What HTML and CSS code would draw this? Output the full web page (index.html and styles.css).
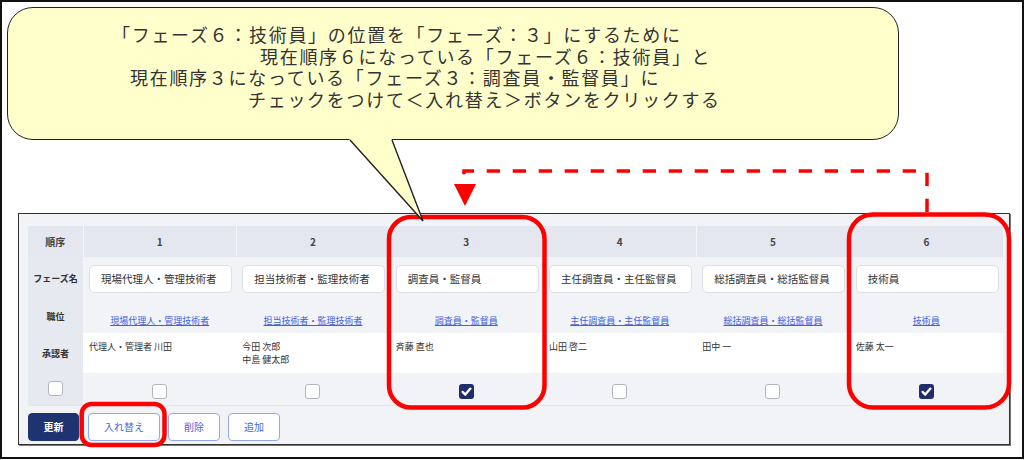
FILE: index.html
```html
<!DOCTYPE html>
<html lang="ja">
<head>
<meta charset="UTF-8">
<title>フェーズ設定</title>
<link rel="stylesheet" href="styles.css">
</head>
<body>
<div class="sheet">
  <!-- 吹き出しの説明 -->
  <div class="bubble">
    <p class="line l1">「フェーズ６：技術員」の位置を「フェーズ：３」にするために</p>
    <p class="line l2">現在順序６になっている「フェーズ６：技術員」と</p>
    <p class="line l3">現在順序３になっている「フェーズ３：調査員・監督員」に</p>
    <p class="line l4">チェックをつけて＜入れ替え＞ボタンをクリックする</p>
  </div>

  <!-- フェーズ一覧 -->
  <div class="panel">
    <table class="phase-table">
      <colgroup>
        <col class="col-label">
        <col><col><col><col><col><col>
      </colgroup>
      <tr class="row-head">
        <th>順序</th>
        <th>1</th><th>2</th><th>3</th><th>4</th><th>5</th><th>6</th>
      </tr>
      <tr class="row-name">
        <th>フェーズ名</th>
        <td><input class="name-input" type="text" value="現場代理人・管理技術者"></td>
        <td><input class="name-input" type="text" value="担当技術者・監理技術者"></td>
        <td><input class="name-input" type="text" value="調査員・監督員"></td>
        <td><input class="name-input" type="text" value="主任調査員・主任監督員"></td>
        <td><input class="name-input" type="text" value="総括調査員・総括監督員"></td>
        <td><input class="name-input" type="text" value="技術員"></td>
      </tr>
      <tr class="row-post">
        <th>職位</th>
        <td><a href="#">現場代理人・管理技術者</a></td>
        <td><a href="#">担当技術者・監理技術者</a></td>
        <td><a href="#">調査員・監督員</a></td>
        <td><a href="#">主任調査員・主任監督員</a></td>
        <td><a href="#">総括調査員・総括監督員</a></td>
        <td><a href="#">技術員</a></td>
      </tr>
      <tr class="row-approver">
        <th>承認者</th>
        <td>代理人・管理者 川田</td>
        <td>今田 次郎<br>中島 健太郎</td>
        <td>斉藤 直也</td>
        <td>山田 啓二</td>
        <td>田中 一</td>
        <td>佐藤 太一</td>
      </tr>
      <tr class="row-check">
        <th><span class="chk"></span></th>
        <td><span class="chk"></span></td>
        <td><span class="chk"></span></td>
        <td><span class="chk is-checked"><svg viewBox="0 0 15 15" width="15" height="15"><path d="M3.6 7.9 L6.3 10.6 L11.4 4.6" fill="none" stroke="#fff" stroke-width="2.3" stroke-linecap="round" stroke-linejoin="round"/></svg></span></td>
        <td><span class="chk"></span></td>
        <td><span class="chk"></span></td>
        <td><span class="chk is-checked"><svg viewBox="0 0 15 15" width="15" height="15"><path d="M3.6 7.9 L6.3 10.6 L11.4 4.6" fill="none" stroke="#fff" stroke-width="2.3" stroke-linecap="round" stroke-linejoin="round"/></svg></span></td>
      </tr>
    </table>
    <div class="actions">
      <button class="btn btn-primary" type="button">更新</button>
      <button class="btn" type="button">入れ替え</button>
      <button class="btn" type="button">削除</button>
      <button class="btn" type="button">追加</button>
    </div>
  </div>
</div>

<!-- 注釈（赤枠・点線矢印・吹き出しのしっぽ） -->
<svg class="marks" width="1024" height="460" viewBox="0 0 1024 460">
  <rect x="389" y="217" width="155.5" height="190.5" rx="22" fill="none" stroke="#ff0000" stroke-width="4.5"/>
  <rect x="849" y="214.5" width="160" height="193" rx="24" fill="none" stroke="#ff0000" stroke-width="4.5"/>
  <rect x="81.7" y="404" width="82.8" height="41" rx="10" fill="none" stroke="#ff0000" stroke-width="4.5"/>
  <path d="M927 212 V171 H464 V176" fill="none" stroke="#ff0000" stroke-width="3.5" stroke-dasharray="13.3 12.7"/>
  <polygon points="454,184 476,184 465,206" fill="#ff0000"/>
  <polygon points="346.4,136 390.5,136 423,221" fill="#ffffcc"/>
  <path d="M350 140 L423 221 L392 140" fill="none" stroke="#222" stroke-width="1.4"/>
</svg>
</body>
</html>
```

FILE: styles.css
```css
* { box-sizing: border-box; }
body {
  margin: 0;
  position: relative;
  width: 1024px;
  height: 460px;
  background: #fff;
  font-family: "Noto Sans CJK JP", "Noto Sans", sans-serif;
  color: #333;
}
.sheet {
  width: 1024px;
  height: 459px;
  border: 2px solid #111;
  overflow: hidden;
}

/* 吹き出し */
.bubble {
  width: 892px;
  height: 133px;
  margin: 5px 0 0 5px;
  padding-top: 18px;
  background: #ffffcc;
  border: 1.5px solid #222;
  border-radius: 26px;
}
.bubble .line {
  margin: 0;
  font-family: "Liberation Sans", "Noto Sans CJK JP", sans-serif;
  font-size: 18px;
  line-height: 21.7px;
  letter-spacing: 1.7px;
  color: #333;
  white-space: nowrap;
}
.bubble .l1 { padding-left: 104px; }
.bubble .l2 { padding-left: 252px; }
.bubble .l3 { padding-left: 122px; }
.bubble .l4 { padding-left: 240px; }

/* 一覧パネル */
.panel {
  width: 992px;
  height: 232px;
  margin: 73px 0 0 16px;
  padding: 12px 6px 0 9px;
  background: #f2f3f7;
  border: 1px solid #333;
  box-shadow: 1px 1px 0 #777;
}
.phase-table {
  width: 975px;
  table-layout: fixed;
  border-collapse: collapse;
  border-bottom: 1px solid #e2e5ec;
}
.phase-table .col-label { width: 55px; }
.phase-table th {
  background: #e6e9f0;
  font-size: 9px;
  font-weight: 700;
  color: #333;
  text-align: center;
  padding: 0;
}
.phase-table td {
  padding: 0;
  text-align: center;
}
.row-head th {
  height: 31px;
  background: #e4e7ef;
  border-right: 1px solid #f4f5f9;
  font-size: 10px;
  color: #444;
}
.row-head th:last-child { border-right: 0; }
.row-name td { height: 43px; text-align: left; }
.name-input {
  display: block;
  width: 143px;
  height: 28px;
  margin-left: 6px;
  padding: 0 11px;
  border: 1px solid #dcdfe6;
  border-radius: 5px;
  background: #fff;
  font-family: inherit;
  font-size: 10.5px;
  color: #333;
}
.row-post td { height: 33px; }
.row-post a {
  font-size: 9px;
  color: #3f62e0;
  text-decoration: underline;
}
.row-approver td {
  height: 40px;
  background: #fff;
  text-align: left;
  vertical-align: top;
  padding: 7px 0 0 6px;
  font-size: 9px;
  line-height: 13.3px;
  color: #333;
}
.row-check td, .row-check th { height: 32px; }
.chk {
  display: inline-block;
  width: 15px;
  height: 15px;
  border: 1px solid #b3b6bd;
  border-radius: 3px;
  background: #fff;
  vertical-align: middle;
}
.chk.is-checked {
  border: 0;
  background: #1f2d6b;
}
.chk svg { display: block; }

/* ボタン */
.actions {
  display: flex;
  gap: 8px;
  margin-top: 7px;
}
.btn {
  height: 28px;
  padding: 0 15px;
  border: 1px solid #93a9ef;
  border-radius: 4px;
  background: #fff;
  font-family: inherit;
  font-size: 10px;
  color: #4666d8;
}
.btn-primary {
  margin-right: 1px;
  padding: 0 14.5px;
  border-color: #1e3370;
  background: #1e3370;
  color: #fff;
  font-weight: 700;
}

.marks {
  position: absolute;
  top: 0;
  left: 0;
  pointer-events: none;
}
```
